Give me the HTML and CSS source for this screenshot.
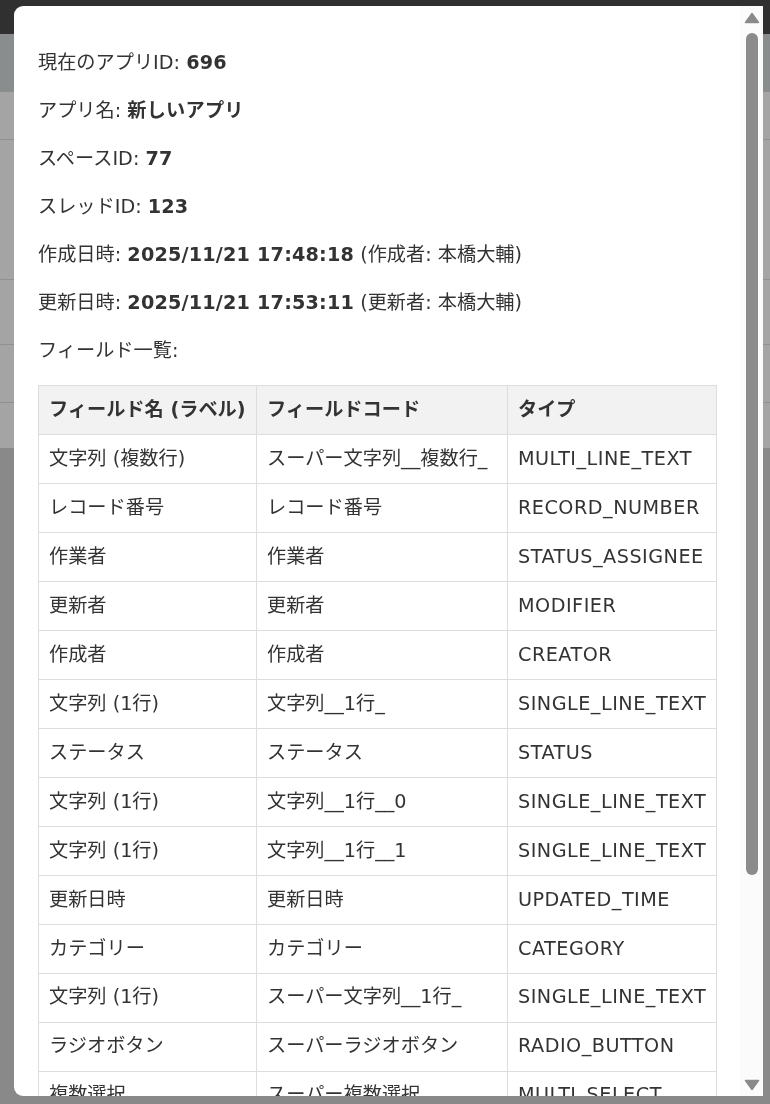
FILE: index.html
```html
<!DOCTYPE html>
<html lang="ja">
<head>
<meta charset="utf-8">
<title>アプリ情報</title>
<link rel="stylesheet" href="styles.css">
</head>
<body>
<div class="page">
  <div class="page-header"></div>
  <div class="page-band"></div>
  <div class="page-list">
    <div class="page-row r1"></div>
    <div class="page-row r2"></div>
    <div class="page-row r3"></div>
    <div class="page-row r4"></div>
    <div class="page-row r5"></div>
  </div>
</div>

<div class="modal">
  <div class="modal-body">
    <p>現在のアプリID: <b>696</b></p>
    <p>アプリ名: <b>新しいアプリ</b></p>
    <p>スペースID: <b>77</b></p>
    <p>スレッドID: <b>123</b></p>
    <p>作成日時: <b>2025/11/21 17:48:18</b> (作成者: 本橋大輔)</p>
    <p>更新日時: <b>2025/11/21 17:53:11</b> (更新者: 本橋大輔)</p>
    <p>フィールド一覧:</p>
    <table class="fields">
      <colgroup>
        <col class="c1"><col class="c2"><col class="c3">
      </colgroup>
      <thead>
        <tr><th>フィールド名 (ラベル)</th><th>フィールドコード</th><th>タイプ</th></tr>
      </thead>
      <tbody>
        <tr><td>文字列 (複数行)</td><td>スーパー文字列__複数行_</td><td>MULTI_LINE_TEXT</td></tr>
        <tr><td>レコード番号</td><td>レコード番号</td><td>RECORD_NUMBER</td></tr>
        <tr><td>作業者</td><td>作業者</td><td>STATUS_ASSIGNEE</td></tr>
        <tr><td>更新者</td><td>更新者</td><td>MODIFIER</td></tr>
        <tr><td>作成者</td><td>作成者</td><td>CREATOR</td></tr>
        <tr><td>文字列 (1行)</td><td>文字列__1行_</td><td>SINGLE_LINE_TEXT</td></tr>
        <tr><td>ステータス</td><td>ステータス</td><td>STATUS</td></tr>
        <tr><td>文字列 (1行)</td><td>文字列__1行__0</td><td>SINGLE_LINE_TEXT</td></tr>
        <tr><td>文字列 (1行)</td><td>文字列__1行__1</td><td>SINGLE_LINE_TEXT</td></tr>
        <tr><td>更新日時</td><td>更新日時</td><td>UPDATED_TIME</td></tr>
        <tr><td>カテゴリー</td><td>カテゴリー</td><td>CATEGORY</td></tr>
        <tr><td>文字列 (1行)</td><td>スーパー文字列__1行_</td><td>SINGLE_LINE_TEXT</td></tr>
        <tr><td>ラジオボタン</td><td>スーパーラジオボタン</td><td>RADIO_BUTTON</td></tr>
        <tr><td>複数選択</td><td>スーパー複数選択</td><td>MULTI_SELECT</td></tr>
      </tbody>
    </table>
  </div>
  <div class="scrollbar">
    <svg class="arrow" width="16" height="12" viewBox="0 0 16 12" aria-hidden="true">
      <polygon points="8,1.5 14.5,10.5 1.5,10.5" fill="#8a8a8a" stroke="#8a8a8a" stroke-width="1.5" stroke-linejoin="round"/>
    </svg>
    <div class="thumb"></div>
    <div class="track-rest"></div>
    <svg class="arrow" width="16" height="12" viewBox="0 0 16 12" aria-hidden="true">
      <polygon points="1.5,1.5 14.5,1.5 8,10.5" fill="#8a8a8a" stroke="#8a8a8a" stroke-width="1.5" stroke-linejoin="round"/>
    </svg>
  </div>
</div>
</body>
</html>
```

FILE: styles.css
```css
html, body {
  margin: 0;
  padding: 0;
}

body {
  background: #898989;
  height: 1104px;
  overflow: hidden;
  font-family: "DejaVu Sans", "Noto Sans CJK JP", sans-serif;
  color: #333;
}

/* dimmed page behind the dialog */
.page-header {
  height: 34px;
  background: #303030;
}

.page-band {
  height: 58px;
  background: #8a8d8d;
}

.page-list {
  background: #a4a4a4;
}

.page-row {
  border-bottom: 1px solid #909090;
}

.page-row.r1 { height: 47px; }
.page-row.r2 { height: 139px; }
.page-row.r3 { height: 64px; }
.page-row.r4 { height: 57px; }
.page-row.r5 { height: 45px; border-bottom: none; }

/* dialog */
.modal {
  position: fixed;
  top: 6px;
  left: 14px;
  width: 749px;
  height: 1090px;
  background: #fff;
  border-radius: 9px 0 0 9px;
  display: flex;
  overflow: hidden;
}

.modal-body {
  flex: 1;
  min-width: 0;
  overflow: hidden;
  padding: 24px 24px 0 24px;
  font-size: 19.2px;
  line-height: 28.8px;
}

.modal-body p {
  margin: 19.2px 0;
}

.modal-body b {
  font-weight: 700;
  letter-spacing: 0.2px;
}

.fields {
  width: 678px;
  border-collapse: collapse;
  table-layout: fixed;
  margin-top: 19px;
}

.fields .c1 { width: 218px; }
.fields .c2 { width: 251px; }
.fields .c3 { width: 209px; }

.fields th,
.fields td {
  border: 1px solid #ddd;
  padding: 9.6px 10px;
  text-align: left;
  white-space: nowrap;
  overflow: hidden;
}

.fields td:nth-child(3) {
  letter-spacing: 0.5px;
}

.fields th {
  background: #f2f2f2;
  font-weight: 700;
}

/* scrollbar drawn as part of the dialog */
.scrollbar {
  width: 23px;
  flex: none;
  background: #fbfbfb;
  display: flex;
  flex-direction: column;
  align-items: center;
  padding: 6px 0 5px;
  box-sizing: border-box;
}

.arrow {
  display: block;
  flex: none;
}

.thumb {
  width: 12px;
  height: 842px;
  margin-top: 9px;
  border-radius: 6px;
  background: #8b8b8b;
  flex: none;
}

.track-rest {
  flex: 1;
}
```
